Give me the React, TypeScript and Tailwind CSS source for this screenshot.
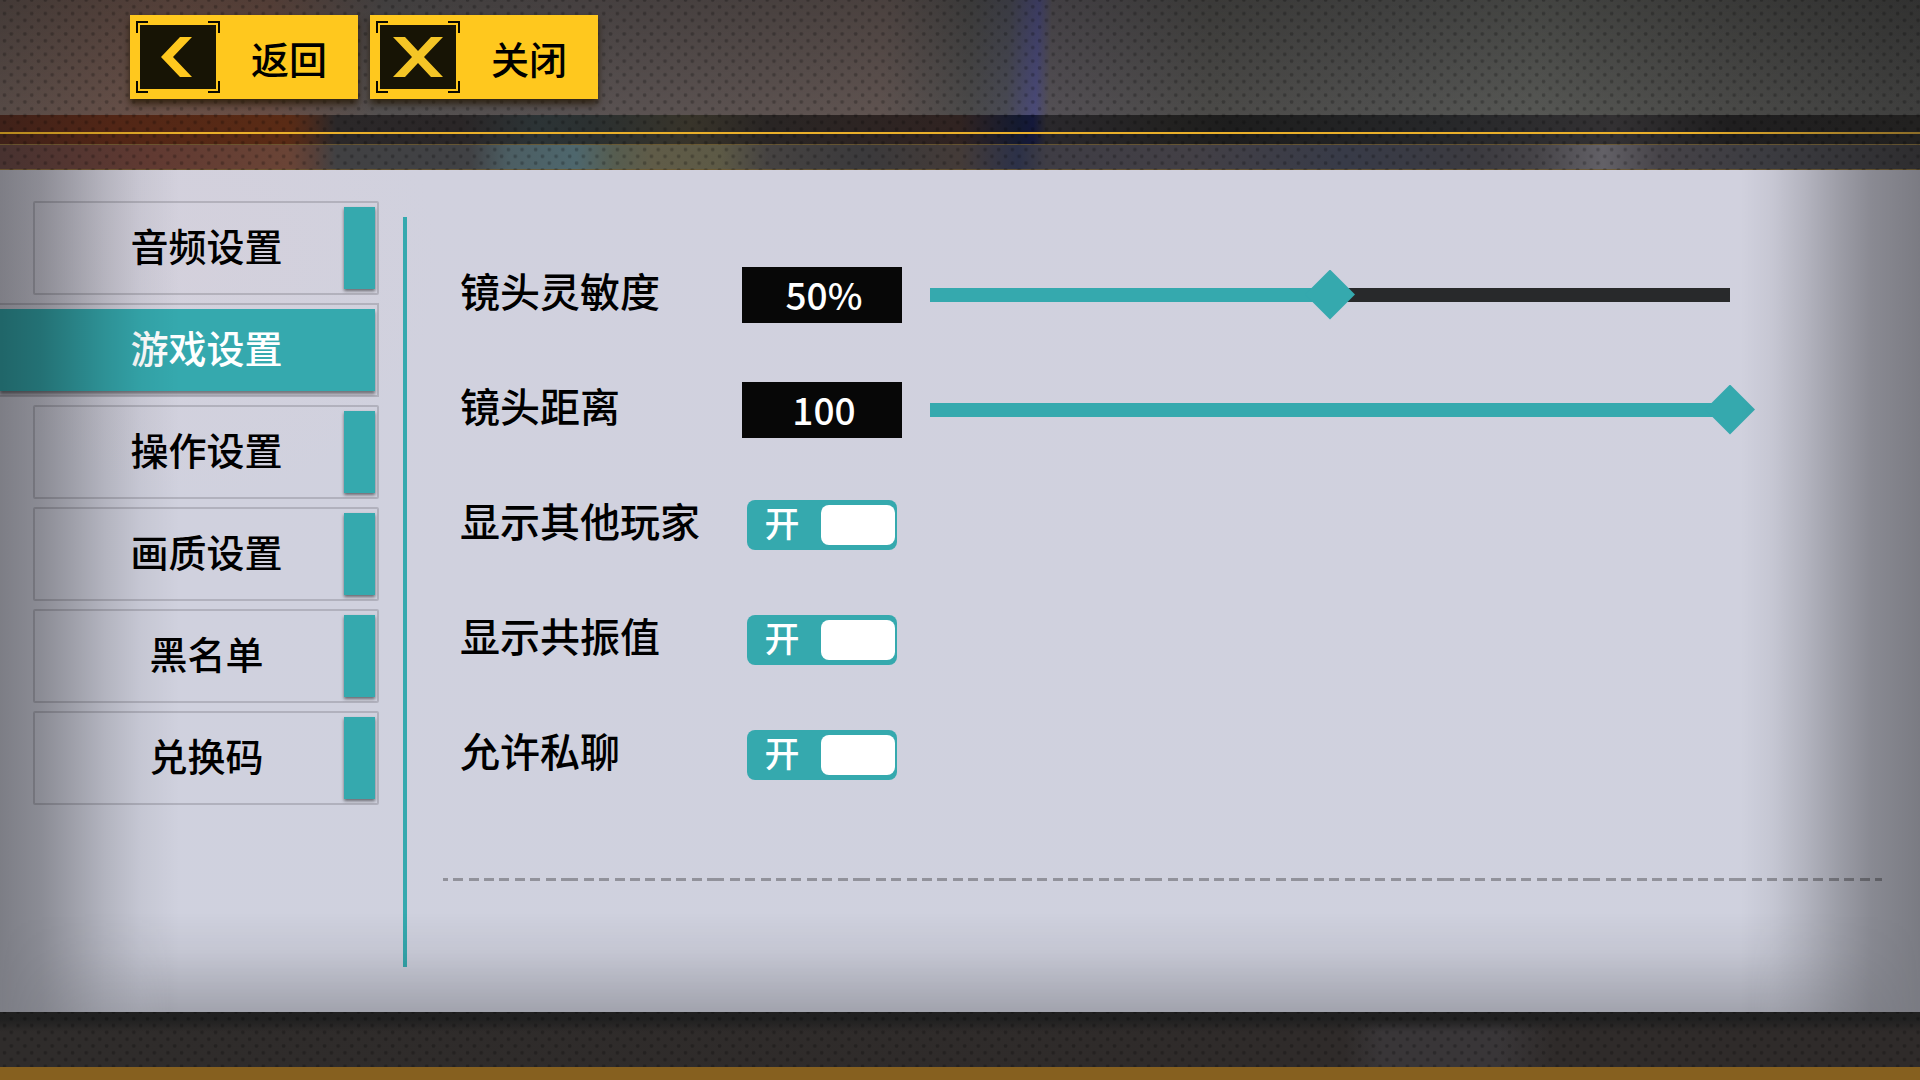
import { useState, type ReactNode } from "react";

const tabs = ["音频设置", "游戏设置", "操作设置", "画质设置", "黑名单", "兑换码"];

const sliders = [
  { id: "sensitivity", label: "镜头灵敏度", value: 50, unit: "%" },
  { id: "distance", label: "镜头距离", value: 100, unit: "" },
];

const switches = [
  { id: "players", label: "显示其他玩家" },
  { id: "resonance", label: "显示共振值" },
  { id: "chat", label: "允许私聊" },
];

/* Perforated metal texture */
function Dots({ id }: { id: string }) {
  return (
    <svg className="pointer-events-none absolute inset-0 size-full" aria-hidden="true">
      <defs>
        <pattern id={id} width="13.62" height="13.6" patternUnits="userSpaceOnUse">
          <rect x="2.8" y="11.8" width="3.4" height="3.4" rx="1" fill="#000" fillOpacity="0.24" />
          <rect x="2.8" y="-1.8" width="3.4" height="3.4" rx="1" fill="#000" fillOpacity="0.24" />
          <rect x="9.6" y="5" width="3.4" height="3.4" rx="1" fill="#000" fillOpacity="0.24" />
        </pattern>
      </defs>
      <rect width="100%" height="100%" fill={`url(#${id})`} />
    </svg>
  );
}

function HeaderButton({ label, children }: { label: string; children: ReactNode }) {
  return (
    <button
      type="button"
      className="flex h-[84px] w-[228px] items-center bg-[#ffc81e] pl-1.5 text-[38px] leading-[56px] font-medium text-black shadow-[0_5px_7px_rgba(35,22,0,0.75)]"
    >
      <svg className="h-[72px] w-[84px] shrink-0" viewBox="0 0 84 72" aria-hidden="true">
        <rect x="4" y="4" width="76" height="64" fill="#171405" />
        <path
          d="M1 12V1H12M72 1H83V12M83 60V71H72M12 71H1V60"
          fill="none"
          stroke="#0a0900"
          strokeWidth="2"
        />
        {children}
      </svg>
      <span className="flex-1 pt-0.5 text-center">{label}</span>
    </button>
  );
}

/* Header */
function Header() {
  return (
    <header className="relative shrink-0">
      <div className="bg-[linear-gradient(180deg,rgba(0,0,0,0.22),rgba(0,0,0,0)),linear-gradient(92deg,#564a46_0%,#6b5148_9%,#694e45_14%,#535050_20%,#595252_30%,#5c5250_40%,#5f5350_46%,#4a4949_50.5%,#494a54_52.5%,#4a4a78_54%,#545055_54.7%,#4b4a48_63%,#50504f_72%,#565754_80%,#4c4c4a_88%,#3f3f3e_100%)]">
        <div className="h-[115px]" />
      </div>
      <div className="h-[29px] bg-[linear-gradient(90deg,#3f2119_0%,#522616_6%,#5a2b15_15%,#4c2a1c_16%,#2b2829_17.5%,#2a2627_24%,#2c3436_28%,#2b3030_31%,#38342a_36%,#292524_40%,#302321_50%,#141a30_53%,#14183a_53.8%,#2a282c_54.5%,#222120_61%,#1d1d1d_64%,#262729_75%,#333133_84%,#1f1e1f_90%,#222120_100%)]">
        <div className="h-[17px]" />
        <div className="h-0.5 bg-[linear-gradient(90deg,#b5881e,#eab02a_10%,#eab02a_88%,#8c6d28)]" />
      </div>
      <div className="h-[26px] border-y border-[#6e5a2e]/80 bg-[linear-gradient(90deg,#483230_0%,#613a32_8%,#6a4436_15%,#584039_16.3%,#414143_17.5%,#414245_24.5%,#4c5e63_26.5%,#4e676d_30%,#565d50_32%,#605c48_34%,#5d5a46_37.5%,#464342_40%,#3b3a3c_45%,#443b38_50%,#2c3148_53%,#3f3d45_54.5%,#434046_62%,#383b48_70%,#3c3b40_77%,#464448_80%,#636167_83.5%,#464348_86.5%,#3c3c41_92%,#2e2d2f_100%)]" />
      <Dots id="dots-header" />
      {/* Buttons sit above the texture */}
      <nav className="absolute inset-x-0 top-0 flex items-start gap-3 pt-[15px] pl-[130px]">
        <HeaderButton label="返回">
          <path d="M44 16H56L37 36L56 56H44L25 36Z" fill="#ffc81e" />
        </HeaderButton>
        <HeaderButton label="关闭">
          <path
            d="M17 16H29L42 30L55 16H67L48 36L67 56H55L42 42L29 56H17L36 36Z"
            fill="#f4c526"
          />
        </HeaderButton>
      </nav>
    </header>
  );
}

/* Left tabs */
function Sidebar() {
  const [active, setActive] = useState("游戏设置");

  return (
    <nav className="flex w-[379px] shrink-0 flex-col gap-2 pt-[31px]">
      {tabs.map((tab) =>
        tab === active ? (
          <button
            key={tab}
            type="button"
            aria-current="page"
            className="h-[94px] border-2 border-l-0 border-black/15 py-1 pr-0.5 text-[38px] leading-[56px] font-medium text-white"
          >
            <span className="flex h-[82px] items-center justify-center bg-[#35a9ae] pb-1.5 pl-[38px] shadow-[0_3px_3px_rgba(0,0,0,0.45)]">
              {tab}
            </span>
          </button>
        ) : (
          <button
            key={tab}
            type="button"
            onClick={() => setActive(tab)}
            className="ml-[33px] flex h-[94px] items-center rounded-xs border-2 border-black/15 pr-0.5 text-[38px] leading-[56px] font-medium text-black"
          >
            <span className="flex-1 pb-1.5 pl-[34px] text-center">{tab}</span>
            <span className="h-[82px] w-[31px] bg-[#35a9ae] shadow-[0_2px_3px_rgba(0,0,0,0.5)]" />
          </button>
        )
      )}
    </nav>
  );
}

function SliderRow({ id, label, value, unit }: (typeof sliders)[number]) {
  const [current, setCurrent] = useState(value);

  return (
    <div className="flex h-[115px] items-center">
      <label htmlFor={id} className="w-[282px] shrink-0 pb-2.5">
        {label}
      </label>
      <output
        htmlFor={id}
        className="flex h-14 w-40 shrink-0 items-center justify-center bg-[#070707] pb-0.5 pl-1 text-[37px] leading-[54px] text-white"
      >
        {current}
        {unit}
      </output>
      <div className="relative mr-[152px] ml-7 h-3.5 flex-1 bg-[#28292b]">
        <div className="h-full bg-[#35a9ae]" style={{ width: `${current}%` }} />
        <input
          id={id}
          type="range"
          min={0}
          max={100}
          value={current}
          onChange={(e) => setCurrent(Number(e.target.value))}
          className="absolute -inset-x-[25px] -inset-y-[18px] cursor-pointer appearance-none bg-transparent [&::-webkit-slider-thumb]:size-[50px] [&::-webkit-slider-thumb]:appearance-none [&::-webkit-slider-thumb]:bg-[#35a9ae] [&::-webkit-slider-thumb]:[clip-path:polygon(50%_0,100%_50%,50%_100%,0_50%)]"
        />
      </div>
    </div>
  );
}

function SwitchRow({ id, label }: (typeof switches)[number]) {
  const [on, setOn] = useState(true);

  return (
    <div className="flex h-[115px] items-center">
      <label htmlFor={id} className="w-[287px] shrink-0 pb-2.5">
        {label}
      </label>
      <label
        className={`flex h-[50px] w-[150px] cursor-pointer items-center justify-between rounded-lg pr-0.5 ${
          on ? "bg-[#35a9ae]" : "flex-row-reverse bg-[#28292b]"
        }`}
      >
        <input
          id={id}
          type="checkbox"
          role="switch"
          checked={on}
          onChange={(e) => setOn(e.target.checked)}
          className="sr-only"
        />
        <span className="flex-1 pr-1 pb-1.5 text-center text-[35px] leading-[44px] text-white">
          {on ? "开" : "关"}
        </span>
        <span className="h-10 w-[74px] rounded-lg bg-white" />
      </label>
    </div>
  );
}

export default function App() {
  return (
    <div className="flex min-h-screen flex-col overflow-x-hidden bg-[#2f2b2a] font-['Noto_Sans_CJK_SC','Noto_Sans',sans-serif]">
      <Header />

      <main className="relative flex flex-1 bg-[radial-gradient(circle_at_200px_90px,rgba(216,208,217,0.4),transparent_240px),linear-gradient(180deg,#d1d1de,#cfd1de)]">
        <Sidebar />

        <div className="mt-[47px] mb-[45px] ml-6 w-1 shrink-0 bg-[#35a9ae]" />

        <section className="flex-1 pt-[67px] pr-[38px] pl-9 text-[40px] leading-[58px] font-medium text-black">
          <div className="pl-[17px]">
            {sliders.map((s) => (
              <SliderRow key={s.id} {...s} />
            ))}
            {switches.map((s) => (
              <SwitchRow key={s.id} {...s} />
            ))}
          </div>

          {/* Divider */}
          <div className="mt-[66px] h-[3px] bg-[linear-gradient(90deg,#000_17px,transparent_17px_23px,#000_23px_33px,transparent_33px_38px,#000_38px_48px,transparent_48px_54px,#000_54px_64px,transparent_64px_69px,#000_69px_79px,transparent_79px_84px,#000_84px_94px,transparent_94px_100px,#000_100px_110px,transparent_110px_115px,#000_115px_125px,transparent_125px_131px,#000_131px_141px,transparent_141px)] bg-[length:146px_3px] bg-[position:-28px_0] opacity-30" />
        </section>

        {/* Edge shading */}
        <div className="pointer-events-none absolute inset-y-0 left-0 w-[180px] bg-[linear-gradient(90deg,rgba(0,0,0,0.4),rgba(0,0,0,0.33)_23%,rgba(0,0,0,0.25)_38%,rgba(0,0,0,0.14)_58%,rgba(0,0,0,0.05)_78%,rgba(0,0,0,0))]" />
        <div className="pointer-events-none absolute inset-y-0 right-0 w-[180px] bg-[linear-gradient(270deg,rgba(0,0,0,0.41),rgba(0,0,0,0.34)_27%,rgba(0,0,0,0.25)_45%,rgba(0,0,0,0.14)_64%,rgba(0,0,0,0.05)_82%,rgba(0,0,0,0))]" />
        <div className="pointer-events-none absolute inset-x-0 bottom-0 h-[100px] bg-[linear-gradient(0deg,rgba(0,0,0,0.22),rgba(0,0,0,0.14)_28%,rgba(0,0,0,0.05)_60%,rgba(0,0,0,0))] [mask-image:linear-gradient(90deg,transparent,#000_170px,#000_calc(100%-170px),transparent)]" />
      </main>

      {/* Footer */}
      <footer className="relative h-[55px] shrink-0 bg-[linear-gradient(180deg,#202020,#212121_8px,rgba(33,33,33,0)_20px),linear-gradient(90deg,#2f2c2b_0%,#2f2b2a_70%,#393638_72%,#393638_78%,#2f2b2a_81%)]">
        <Dots id="dots-footer" />
      </footer>
      <div className="h-[13px] shrink-0 bg-[#86601f]" />
    </div>
  );
}
